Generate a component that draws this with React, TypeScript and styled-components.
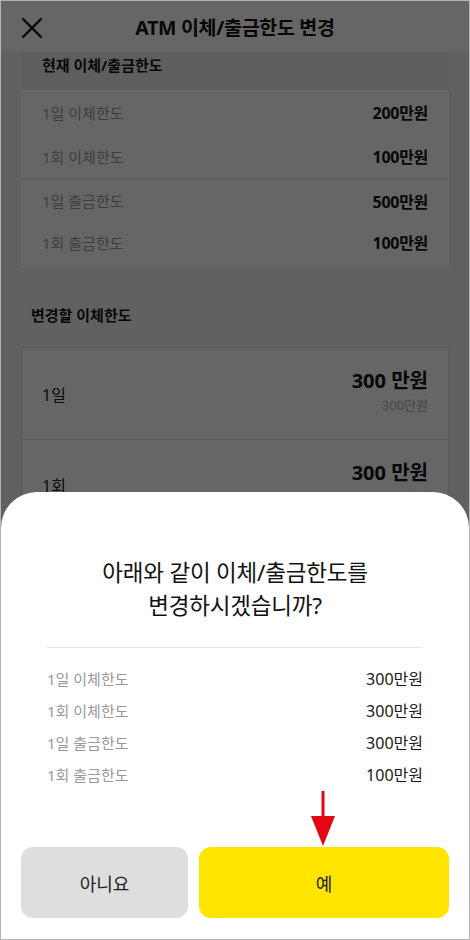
import React from "react";
import styled, { createGlobalStyle } from "styled-components";

const Global = createGlobalStyle`
  html, body { margin: 0; padding: 0; background: #fff; }
  body { font-family: "Noto Sans", "Noto Sans CJK KR", sans-serif; }
  * { box-sizing: border-box; }
`;

const Frame = styled.div`
  position: relative;
  width: 470px;
  height: 940px;
  overflow: hidden;
  border: 1px solid #b4b4b4;
  background: #f3f3f3;
  font-family: "Noto Sans", "Noto Sans CJK KR", sans-serif;
`;

const TopBar = styled.header`
  height: 51px;
  background: #ffffff;
  display: grid;
  grid-template-columns: 60px 1fr 60px;
  align-items: center;
`;

const CloseBtn = styled.div`
  display: flex;
  align-items: center;
  padding-left: 20px;
  padding-top: 2px;
`;

const Title = styled.h1`
  margin: 0;
  text-align: center;
  font-size: 19.5px;
  font-weight: 700;
  color: #111;
  letter-spacing: -0.3px;
`;

const Content = styled.main`
  padding: 0 20px;
  display: flex;
  flex-direction: column;
`;

const CurrentCard = styled.section`
  background: #ffffff;
  display: flex;
  flex-direction: column;
  padding-bottom: 6px;
`;

const CardHead = styled.div`
  height: 38px;
  background: #ececec;
  padding: 0 21px;
  font-size: 15px;
  font-weight: 700;
  color: #111;
  line-height: 26px;
`;

const Group = styled.div<{ $top?: boolean }>`
  padding: 0 21px;
  border-top: ${(p) => (p.$top ? "1px solid #e8e8e8" : "none")};
  display: flex;
  flex-direction: column;
`;

const Row = styled.div<{ $h: number }>`
  height: ${(p) => p.$h}px;
  display: flex;
  align-items: center;
  justify-content: space-between;
`;

const RowLabel = styled.span`
  font-size: 15px;
  color: #9a9a9a;
`;

const RowValue = styled.span`
  font-size: 16px;
  font-weight: 700;
  color: #111;
  letter-spacing: -0.3px;
`;

const SectionTitle = styled.h2`
  margin: 35px 0 0 10px;
  font-size: 15px;
  font-weight: 700;
  color: #111;
  line-height: 24px;
`;

const ChangeBox = styled.section`
  margin-top: 20px;
  background: #ffffff;
  border: 1px solid #dcdcdc;
  display: flex;
  flex-direction: column;
`;

const ChangeRow = styled.div<{ $divider?: boolean }>`
  height: 91px;
  padding: 0 20px 0 20px;
  display: flex;
  align-items: center;
  justify-content: space-between;
  border-top: ${(p) => (p.$divider ? "1px solid #dcdcdc" : "none")};
`;

const ChangeLabel = styled.span`
  font-size: 16px;
  color: #222;
`;

const AmountCol = styled.div`
  display: flex;
  flex-direction: column;
  align-items: flex-end;
  margin-top: -5px;
`;

const BigAmount = styled.span`
  font-size: 20px;
  font-weight: 700;
  color: #111;
  line-height: 28px;
`;

const SmallAmount = styled.span`
  font-size: 13px;
  color: #aaa;
  line-height: 20px;
`;

const Dim = styled.div`
  position: absolute;
  inset: 0;
  background: rgba(0, 0, 0, 0.6);
`;

const Sheet = styled.div`
  position: absolute;
  left: 0;
  right: 0;
  bottom: 0;
  height: 447px;
  background: #ffffff;
  border-radius: 36px 36px 0 0;
  display: flex;
  flex-direction: column;
  padding: 64px 20px 21px;
`;

const SheetTitle = styled.p`
  margin: 0;
  text-align: center;
  font-size: 22.5px;
  line-height: 33px;
  color: #111;
  letter-spacing: -0.2px;
`;

const SheetDivider = styled.hr`
  margin: 25px 26px 0;
  border: none;
  border-top: 1px solid #e6e6e6;
`;

const SummaryList = styled.div`
  margin: 14px 26px 0;
  display: flex;
  flex-direction: column;
`;

const SummaryRow = styled.div`
  height: 32px;
  display: flex;
  align-items: center;
  justify-content: space-between;
`;

const SummaryLabel = styled.span`
  font-size: 15px;
  color: #999;
`;

const SummaryValue = styled.span`
  font-size: 16px;
  color: #1a1a1a;
`;

const Buttons = styled.div`
  margin-top: auto;
  display: grid;
  grid-template-columns: 167px 1fr;
  gap: 11px;
`;

const Button = styled.button<{ $primary?: boolean }>`
  height: 71px;
  border: none;
  border-radius: 12px;
  background: ${(p) => (p.$primary ? "#fee500" : "#dedede")};
  color: #222;
  font-size: 18px;
  font-family: "Noto Sans", "Noto Sans CJK KR", sans-serif;
`;

const Arrow = styled.svg`
  position: absolute;
  left: 308px;
  top: 788px;
`;

const current = [
  ["1일 이체한도", "200만원"],
  ["1회 이체한도", "100만원"],
  ["1일 출금한도", "500만원"],
  ["1회 출금한도", "100만원"],
];

const summary = [
  ["1일 이체한도", "300만원"],
  ["1회 이체한도", "300만원"],
  ["1일 출금한도", "300만원"],
  ["1회 출금한도", "100만원"],
];

export default function App() {
  return (
    <>
      <Global />
      <Frame>
        <TopBar>
          <CloseBtn>
            <svg width="22" height="22" viewBox="0 0 22 22">
              <path d="M2 2 L20 20 M20 2 L2 20" stroke="#111" strokeWidth="2.4" strokeLinecap="round" />
            </svg>
          </CloseBtn>
          <Title>ATM 이체/출금한도 변경</Title>
          <div />
        </TopBar>
        <Content>
          <CurrentCard>
            <CardHead>현재 이체/출금한도</CardHead>
            <Group>
              <Row $h={44}>
                <RowLabel>{current[0][0]}</RowLabel>
                <RowValue>{current[0][1]}</RowValue>
              </Row>
              <Row $h={44}>
                <RowLabel>{current[1][0]}</RowLabel>
                <RowValue>{current[1][1]}</RowValue>
              </Row>
            </Group>
            <Group $top>
              <Row $h={43}>
                <RowLabel>{current[2][0]}</RowLabel>
                <RowValue>{current[2][1]}</RowValue>
              </Row>
              <Row $h={40}>
                <RowLabel>{current[3][0]}</RowLabel>
                <RowValue>{current[3][1]}</RowValue>
              </Row>
            </Group>
          </CurrentCard>
          <SectionTitle>변경할 이체한도</SectionTitle>
          <ChangeBox>
            <ChangeRow>
              <ChangeLabel>1일</ChangeLabel>
              <AmountCol>
                <BigAmount>300 만원</BigAmount>
                <SmallAmount>300만원</SmallAmount>
              </AmountCol>
            </ChangeRow>
            <ChangeRow $divider>
              <ChangeLabel>1회</ChangeLabel>
              <AmountCol>
                <BigAmount>300 만원</BigAmount>
                <SmallAmount>300만원</SmallAmount>
              </AmountCol>
            </ChangeRow>
          </ChangeBox>
        </Content>
        <Dim />
        <Sheet>
          <SheetTitle>
            아래와 같이 이체/출금한도를
            <br />
            변경하시겠습니까?
          </SheetTitle>
          <SheetDivider />
          <SummaryList>
            {summary.map(([l, v]) => (
              <SummaryRow key={l}>
                <SummaryLabel>{l}</SummaryLabel>
                <SummaryValue>{v}</SummaryValue>
              </SummaryRow>
            ))}
          </SummaryList>
          <Buttons>
            <Button>아니요</Button>
            <Button $primary>예</Button>
          </Buttons>
        </Sheet>
        <Arrow width="28" height="60" viewBox="0 0 28 60">
          <rect x="12.5" y="2" width="3" height="30" fill="#e30613" />
          <path d="M2 27 L26 27 L14 57 Z" fill="#e30613" />
        </Arrow>
      </Frame>
    </>
  );
}
